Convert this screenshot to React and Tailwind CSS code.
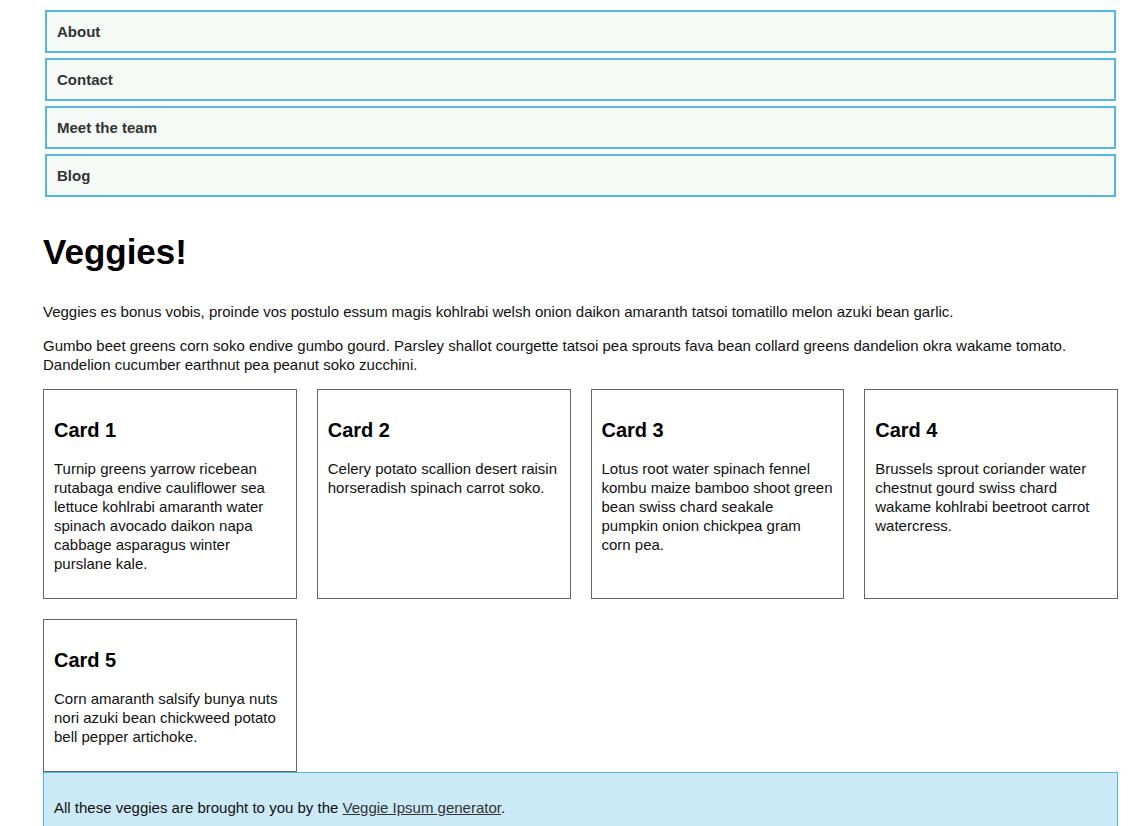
const navItems = ["About", "Contact", "Meet the team", "Blog"];

const cards = [
  {
    title: "Card 1",
    body: "Turnip greens yarrow ricebean rutabaga endive cauliflower sea lettuce kohlrabi amaranth water spinach avocado daikon napa cabbage asparagus winter purslane kale.",
  },
  {
    title: "Card 2",
    body: "Celery potato scallion desert raisin horseradish spinach carrot soko.",
  },
  {
    title: "Card 3",
    body: "Lotus root water spinach fennel kombu maize bamboo shoot green bean swiss chard seakale pumpkin onion chickpea gram corn pea.",
  },
  {
    title: "Card 4",
    body: "Brussels sprout coriander water chestnut gourd swiss chard wakame kohlrabi beetroot carrot watercress.",
  },
  {
    title: "Card 5",
    body: "Corn amaranth salsify bunya nuts nori azuki bean chickweed potato bell pepper artichoke.",
  },
];

export default function App() {
  return (
    <div className="min-h-[826px] bg-white font-['Liberation_Sans',Arial,sans-serif] text-[15px] leading-[19px] text-[#111]">
      <div className="ml-[43px] w-[1075px]">
        {/* Nav */}
        <nav className="px-[2px] pt-[10px]">
          <ul className="flex flex-col gap-[5px]">
            {navItems.map((item) => (
              <li
                key={item}
                className="border-2 border-[#4fb9e3] bg-[#f5faf7] px-[10px] py-[10px] font-bold text-[#333]"
              >
                {item}
              </li>
            ))}
          </ul>
        </nav>

        <h1 className="mt-[34px] text-[35px] leading-[41px] font-bold text-black">
          Veggies!
        </h1>

        <p className="mt-[30px]">
          Veggies es bonus vobis, proinde vos postulo essum magis kohlrabi welsh
          onion daikon amaranth tatsoi tomatillo melon azuki bean garlic.
        </p>
        <p className="mt-[15px]">
          Gumbo beet greens corn soko endive gumbo gourd. Parsley shallot
          courgette tatsoi pea sprouts fava bean collard greens dandelion okra
          wakame tomato. Dandelion cucumber earthnut pea peanut soko zucchini.
        </p>

        {/* Cards */}
        <div className="mt-[15px] grid grid-cols-4 gap-[20px]">
          {cards.map((card) => (
            <article
              key={card.title}
              className="border border-[#666] p-[10px]"
            >
              <h2 className="mt-[18px] text-[20px] leading-[24px] font-bold text-black">
                {card.title}
              </h2>
              <p className="mt-[17px] mb-[15px]">{card.body}</p>
            </article>
          ))}
        </div>

        {/* Footer */}
        <footer className="border border-[#4fb9e3] bg-[#cbe9f6] px-[10px] pt-[25px] pb-[19px]">
          <p>
            All these veggies are brought to you by the{" "}
            <a href="#" className="text-[#333] underline">
              Veggie Ipsum generator
            </a>
            .
          </p>
        </footer>
      </div>
    </div>
  );
}
